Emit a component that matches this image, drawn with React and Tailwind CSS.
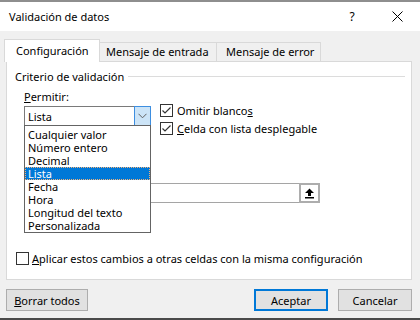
import React from "react";

const items = [
  "Cualquier valor",
  "Número entero",
  "Decimal",
  "Lista",
  "Fecha",
  "Hora",
  "Longitud del texto",
  "Personalizada",
];

function Check({ checked }) {
  return (
    <span className="flex h-[13px] w-[13px] shrink-0 items-center justify-center border border-[#333333] bg-white">
      {checked && (
        <svg width="11" height="11" viewBox="0 0 11 11">
          <path d="M1.5 5.5 L4 8 L9.5 2.5" fill="none" stroke="#333333" strokeWidth="1.2" />
        </svg>
      )}
    </span>
  );
}

function Btn({ children, primary, className = "" }) {
  return (
    <button
      className={
        "flex h-[22px] items-center justify-center bg-[#e1e1e1] text-[11px] text-black " +
        (primary ? "border-2 border-[#0078d7] " : "border border-[#adadad] ") +
        className
      }
    >
      {children}
    </button>
  );
}

export default function App() {
  return (
    <div className="flex h-[320px] w-[420px] flex-col overflow-hidden bg-[#f0f0f0] font-['Noto_Sans',sans-serif] text-[11px] leading-[15px] text-black">
      {/* title bar */}
      <div className="flex h-[31px] shrink-0 items-center border-t-2 border-[#8e8e8e] bg-white">
        <span className="flex-1 pl-[9px] text-[11px]">Validación de datos</span>
        <span className="flex w-[46px] justify-center text-[12px]">?</span>
        <span className="flex w-[45px] justify-center">
          <svg width="11" height="11" viewBox="0 0 11 11">
            <path d="M0.5 0.5 L10.5 10.5 M10.5 0.5 L0.5 10.5" stroke="#000" strokeWidth="1" />
          </svg>
        </span>
      </div>

      {/* tabs */}
      <div className="mt-[8px] flex h-[23px] items-end pl-[4px]">
        <div className="relative z-10 flex h-[23px] w-[96px] items-center border border-b-0 border-[#d9d9d9] bg-white pl-[11px] pb-[1px]">
          Configuración
        </div>
        <div className="flex h-[20px] w-[117px] items-center border border-l-0 border-[#d9d9d9] bg-[#f0f0f0] pl-[6px] pb-[1px]">
          Mensaje de entrada
        </div>
        <div className="flex h-[20px] w-[104px] items-center border border-l-0 border-[#d9d9d9] bg-[#f0f0f0] pl-[9px] pb-[1px]">
          Mensaje de error
        </div>
      </div>

      {/* panel */}
      <div className="relative -mt-px ml-[6px] mr-[8px] h-[219px] border border-[#d9d9d9] bg-white">
        <div className="mt-[7px] flex h-[15px] items-center gap-[4px] pl-[8px] pr-[6px]">
          <span>Criterio de validación</span>
          <div className="h-px flex-1 bg-[#dcdcdc]" />
        </div>

        <div className="flex gap-[9px] pl-[17px]">
          <div className="w-[127px]">
            <div className="mt-[5px] h-[15px]">
              <span className="underline">P</span>ermitir:
            </div>
            <div className="mt-[2px] flex h-[20px] items-center border border-[#7a7a7a] bg-white">
              <span className="flex-1 pl-[3px]">Lista</span>
              <span className="flex h-[20px] w-[17px] items-center justify-center border border-[#3d8ee0] bg-[#cce4f7] -mr-px">
                <svg width="9" height="6" viewBox="0 0 9 6">
                  <path d="M0.5 0.8 L4.5 4.8 L8.5 0.8" fill="none" stroke="#606060" strokeWidth="1" />
                </svg>
              </span>
            </div>
          </div>
          <div className="pt-[17px]">
            <div className="flex h-[18px] items-center gap-[4px]">
              <Check checked />
              <span>
                Omitir blanco<span className="underline">s</span>
              </span>
            </div>
            <div className="flex h-[18px] items-center gap-[4px]">
              <Check checked />
              <span>
                <span className="underline">C</span>elda con lista desplegable
              </span>
            </div>
          </div>
        </div>

        {/* source input */}
        <div className="ml-[17px] mt-[46px] flex h-[20px] w-[296px] border border-[#a5a5a5] bg-white">
          <div className="flex-1" />
          <span className="-my-px -mr-px flex h-[20px] w-[21px] items-center justify-center border-2 border-[#adadad] bg-white">
            <svg width="11" height="11" viewBox="0 0 11 11">
              <path d="M5.5 0.5 L10 5 L7 5 L7 8 L4 8 L4 5 L1 5 Z" fill="#000" />
              <rect x="1" y="9" width="9" height="1.5" fill="#000" />
            </svg>
          </span>
        </div>

        <div className="mt-[46px] flex h-[18px] items-center gap-[3px] pl-[9px]">
          <Check />
          <span>
            <span className="underline">A</span>plicar estos cambios a otras celdas con la misma configuración
          </span>
        </div>

        {/* open dropdown list */}
        <div className="absolute left-[17px] top-[63px] z-20 w-[127px] border border-[#646464] bg-white pt-[2px]">
          {items.map((it) => (
            <div
              key={it}
              className={
                it === "Lista"
                  ? "flex h-[13px] items-center border border-dotted border-[#f3b27a] bg-[#0078d7] px-[2px] leading-[13px] text-white"
                  : "flex h-[13px] items-center border border-transparent px-[2px] leading-[13px]"
              }
            >
              {it}
            </div>
          ))}
        </div>
      </div>

      {/* buttons */}
      <div className="mt-[9px] flex pl-[6px] pr-[8px]">
        <Btn className="w-[82px]">
          <span>
            <span className="underline">B</span>orrar todos
          </span>
        </Btn>
        <div className="flex-1" />
        <Btn primary className="w-[74px]">Aceptar</Btn>
        <Btn className="ml-[10px] w-[74px]">Cancelar</Btn>
      </div>

      <div className="flex-1" />
      <div className="h-[2px] shrink-0 bg-[#4a4a4a]" />
    </div>
  );
}
